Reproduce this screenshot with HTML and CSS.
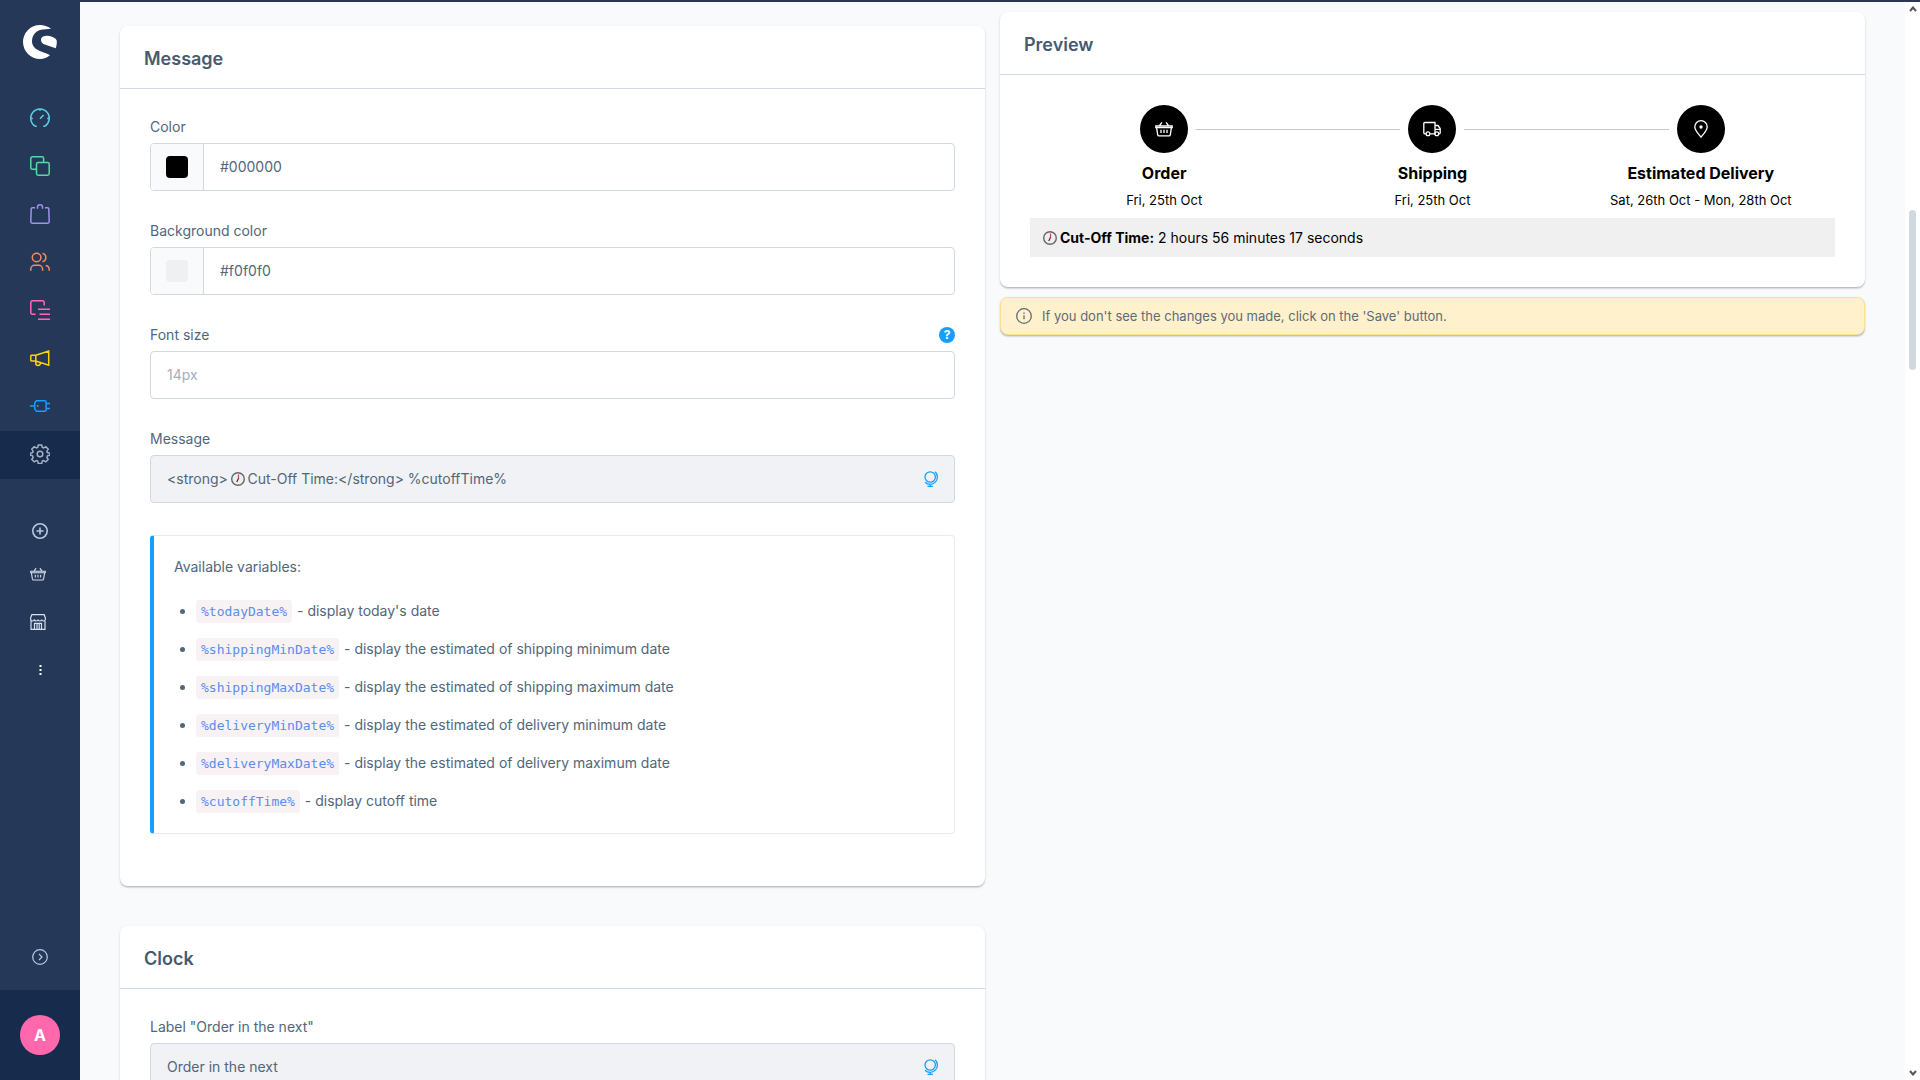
FILE: index.html
```html
<!DOCTYPE html>
<html lang="en">
<head>
<meta charset="utf-8">
<title>Message settings</title>
<link rel="stylesheet" href="styles.css">
</head>
<body>
<svg class="sprite" aria-hidden="true">
  <symbol id="globe" viewBox="0 0 16 16"><circle cx="6.200" cy="6" r="5.200"/><path d="M11.200.8A7.200 7.200 0 0 1 1 11.200M6.200 13.200v2M3.500 15.300h5.400"/></symbol>
  <symbol id="clock" viewBox="0 0 16 16"><circle cx="8" cy="8" r="6.300" fill="#eee" stroke="#666" stroke-width="1.400"/><path d="M8.500 3.500V8" stroke="#c2456f" stroke-width="1.200"/><path d="M8.500 7.500l-1.800 3.500" stroke="#333" stroke-width="1.200"/></symbol>
  <symbol id="basket" viewBox="0 0 18 16"><path d="M.8 5h16.4v1.6H.8zM1.6 6.6l1.1 7.2q.2 1 1.2 1h10.2q1 0 1.2-1l1.1-7.2M4.3 5l2.6-3.6M13.7 5l-2.6-3.6M6 8.8V12M9 8.8V12M12 8.8V12"/></symbol>
</svg>
<div class="app">
  <aside class="sidebar">
    <a href="#" class="logo" aria-label="Home"><svg viewBox="69 75 102 102"><path d="M153 86C143 79 131 75 120 75a51 51 0 0 0 0 102c12 0 22-4 30-11-8-6-20-9-32-14-14-6-22-15-22-28 0-22 16-36 41-36q10-1 16-2zM123 119c0-8 8-12 20-12 12 1 23 6 27 14 1 9 0 17-3 24-10-4-20-7-31-11-9-3-13-8-13-15z"/></svg></a>
    <nav class="nav" aria-label="Main">
      <a href="#" class="cyan" aria-label="Dashboard"><svg viewBox="0 0 20 20"><path d="M6.8 18.3H5.4a9.3 9.3 0 1 1 9.2 0h-1.4M10 .8v2M.8 10.6h2M17.2 10.6h2M10 10.8L13.6 7"/></svg></a>
      <a href="#" class="green" aria-label="Catalogues"><svg viewBox="0 0 20 20"><path d="M6.5 13.3H2.4A1.6 1.6 0 0 1 .8 11.700V2.400A1.600 1.600 0 0 1 2.400.8h9.600A1.600 1.600 0 0 1 13.600 2.400v4.100"/><rect x="6.500" y="6.500" width="12.700" height="12.700" rx="1.600"/></svg></a>
      <a href="#" class="violet" aria-label="Orders"><svg viewBox="0 0 20 20"><path d="M5 3.700H2.300Q1.200 3.700 1.200 4.800L.8 17.800q0 1.400 1.400 1.400h15.600q1.400 0 1.400-1.400L18.800 4.800q0-1.100-1.100-1.100H15M7.500 4.800V3q0-2.200 2.500-2.200T12.500 3v1.800"/></svg></a>
      <a href="#" class="orange" aria-label="Customers"><svg viewBox="0 0 20 20"><circle cx="6.600" cy="5.500" r="4.300"/><path d="M.8 18.700v-1.600a3.800 3.800 0 0 1 3.800-3.800h4.200a3.800 3.800 0 0 1 3.800 3.800v1.600M12.500 1.300a4.300 4.300 0 0 1 0 8.400M15.700 13.500q3.500.7 3.500 4v1.200"/></svg></a>
      <a href="#" class="pink" aria-label="Content"><svg viewBox="0 0 20 20"><path d="M5.500 14.200H2.300A1.500 1.500 0 0 1 .8 12.700V2.300A1.500 1.500 0 0 1 2.300.8h10.400a1.500 1.500 0 0 1 1.500 1.500v3.200M8 9.200h12M9.500 14.200H20M8 19.200h12"/></svg></a>
      <a href="#" class="yellow" aria-label="Marketing"><svg viewBox="0 0 20 20"><path d="M1.600 7.300h4.200L18.700 3v14.200L5.800 13H1.600q-.8 0-.8-.8V8q0-.7.8-.7zM5.800 7.300V13M5.800 13v2.200q0 2.200 2.200 2.200t2.300-2v-.8"/></svg></a>
      <a href="#" class="blue" aria-label="Extensions"><svg viewBox="0 0 20 20"><path d="M0 10h4.600M6.600 4.800h8q1.500 0 1.500 1.500v7.400q0 1.500-1.500 1.500h-8Q4.700 14.500 4.700 12V8q0-2.500 1.900-3.200zM16 7.500h4M16 12.500h4M7.700 9v2"/></svg></a>
      <a href="#" class="gray active" aria-label="Settings" aria-current="page"><svg viewBox="0 0 20 20"><circle cx="10" cy="10" r="2.800"/><path d="M8.300 1h3.400l.6 2.500 1.300.5 2.200-1.300 2.400 2.400-1.300 2.200.5 1.300 2.500.6v2l-2.500.6-.5 1.500 1.300 2.200-2.400 2.400-2.200-1.300-1.300.5-.6 2.500H8.300l-.6-2.500-1.300-.5-2.200 1.300-2.400-2.400 1.300-2.200-.5-1.500-2.200-.6v-2l2.200-.6.5-1.300-1.300-2.200 2.400-2.400L6.400 4l1.300-.5z"/></svg></a>
    </nav>
    <div class="quick">
      <button class="add" aria-label="Add sales channel"><svg viewBox="0 0 16 16"><circle cx="8" cy="8" r="7.200"/><path d="M8 4.500v7M4.500 8h7"/></svg></button>
      <a href="#" aria-label="Basket"><svg><use href="#basket"/></svg></a>
      <a href="#" aria-label="Storefront"><svg viewBox="0 0 16 16"><path d="M1 7v8.400h14V7M1.800.7h12.400L15.400 4v1.500q-.3 1.500-1.900 1.500T11.700 5.500Q11.400 7 9.800 7T8 5.500Q7.700 7 6.200 7T4.300 5.500Q4 7 2.500 7T.6 5.500V4zM4.500 15V9.300h7V15M7 9.500V15M9.200 9.500V15"/></svg></a>
      <button aria-label="More"><svg viewBox="0 0 16 16"><path class="dots" d="M7.500 3h2v2h-2zM7.500 7h2v2h-2zM7.500 11h2v2h-2z"/></svg></button>
    </div>
    <button class="expand" aria-label="Expand menu"><svg viewBox="0 0 16 16"><circle cx="8" cy="8" r="7.300"/><path d="M7 5l3 3-3 3"/></svg></button>
    <div class="user"><button class="avatar" aria-label="Account">A</button></div>
  </aside>

  <div class="view">
    <main class="content">
      <form class="column settings">
        <section class="card">
          <h2>Message</h2>
          <div class="body">
            <div class="field">
              <label for="color">Color</label>
              <div class="control">
                <span class="picker"><button type="button" class="swatch black" aria-label="Pick color"></button></span>
                <input id="color" type="text" value="#000000">
              </div>
            </div>
            <div class="field">
              <label for="bg">Background color</label>
              <div class="control">
                <span class="picker"><button type="button" class="swatch light" aria-label="Pick background color"></button></span>
                <input id="bg" type="text" value="#f0f0f0">
              </div>
            </div>
            <div class="field">
              <div class="label-row">
                <label for="size">Font size</label>
                <button type="button" class="help" aria-label="Help">?</button>
              </div>
              <div class="control"><input id="size" type="text" placeholder="14px"></div>
            </div>
            <div class="field">
              <label for="msg">Message</label>
              <div class="control inherited">
                <input id="msg" type="text" value="&lt;strong&gt;     Cut-Off Time:&lt;/strong&gt; %cutoffTime%">
                <svg class="clock inline-clock"><use href="#clock"/></svg>
                <svg class="globe"><use href="#globe"/></svg>
              </div>
            </div>
            <div class="variables">
              <p>Available variables:</p>
              <ul>
                <li><code>%todayDate%</code> - display today's date</li>
                <li><code>%shippingMinDate%</code> - display the estimated of shipping minimum date</li>
                <li><code>%shippingMaxDate%</code> - display the estimated of shipping maximum date</li>
                <li><code>%deliveryMinDate%</code> - display the estimated of delivery minimum date</li>
                <li><code>%deliveryMaxDate%</code> - display the estimated of delivery maximum date</li>
                <li><code>%cutoffTime%</code> - display cutoff time</li>
              </ul>
            </div>
          </div>
        </section>
        <section class="card">
          <h2>Clock</h2>
          <div class="body">
            <div class="field">
              <label for="next">Label "Order in the next"</label>
              <div class="control inherited">
                <input id="next" type="text" value="Order in the next">
                <svg class="globe"><use href="#globe"/></svg>
              </div>
            </div>
          </div>
        </section>
      </form>

      <div class="column preview">
        <section class="card">
          <h2>Preview</h2>
          <div class="body">
            <ol class="steps">
              <li>
                <span class="dot"><svg viewBox="0 0 18 16"><use href="#basket"/></svg></span>
                <strong>Order</strong><span>Fri, 25th Oct</span>
              </li>
              <li>
                <span class="dot"><svg viewBox="0 0 18 16"><path d="M3 12.800H1.800q-1 0-1-1V2.500q0-1 1-1H12v11.300H7.200M12 4.500h3l2.200 3v4.300q0 1-1 1H16M12 8.300h5"/><circle cx="5" cy="12.800" r="1.900"/><circle cx="13.800" cy="12.800" r="1.900"/></svg></span>
                <strong>Shipping</strong><span>Fri, 25th Oct</span>
              </li>
              <li>
                <span class="dot"><svg viewBox="0 0 18 18"><path d="M9 17.200C6 13.500 2.800 10 2.800 6.900a6.200 6.200 0 0 1 12.400 0C15.200 10 12 13.500 9 17.200z"/><circle cx="9" cy="7" r="1" fill="#fff"/></svg></span>
                <strong>Estimated Delivery</strong><span>Sat, 26th Oct - Mon, 28th Oct</span>
              </li>
            </ol>
            <div class="cutoff"><svg class="clock"><use href="#clock"/></svg><p><strong>Cut-Off Time:</strong> 2 hours 56 minutes 17 seconds</p></div>
          </div>
        </section>
        <div class="alert" role="status">
          <svg viewBox="0 0 16 16"><circle cx="8" cy="8" r="7.300"/><path d="M8 7.200v4M8 4.500v1.400"/></svg>
          <p>If you don't see the changes you made, click on the 'Save' button.</p>
        </div>
      </div>
    </main>
    <div class="scrollbar" aria-hidden="true">
      <svg viewBox="0 0 8 6"><path d="M1 5l3-3.500L7 5"/></svg>
      <div class="track"><div class="thumb"></div></div>
      <svg viewBox="0 0 8 6"><path d="M1 1l3 3.500L7 1"/></svg>
    </div>
  </div>
</div>
</body>
</html>
```
FILE: styles.css
```css
* { box-sizing: border-box; }
body, h2, p, ul, ol { margin: 0; padding: 0; }
body {
  font: 14px/16px Inter, "Liberation Sans", sans-serif;
  color: #52667a;
  background: #f9fafb;
}
button { border: 0; padding: 0; font: inherit; background: none; cursor: pointer; }
svg { display: block; flex: none; fill: none; stroke: currentColor; }
.sprite { position: absolute; width: 0; height: 0; }

.app { display: flex; height: 100vh; overflow: hidden; }

/* Sidebar */
.sidebar {
  display: flex;
  flex: none;
  flex-direction: column;
  width: 80px;
  color: #d8e0ec;
  background: #253858;
}
.logo { display: flex; justify-content: center; padding: 25px 0 36px; }
.logo svg { width: 34px; height: 34px; fill: #fff; stroke: none; }
.nav a, .quick > * { display: flex; align-items: center; justify-content: center; width: 100%; height: 48px; }
.nav a { padding-bottom: 2px; }
.nav svg { width: 20px; height: 20px; stroke-width: 1.5; }
.nav .active { background: #172b4d; }
.cyan { color: #5fcbe6; }
.green { color: #57d9a3; }
.violet { color: #a092f0; }
.orange { color: #f88962; }
.pink { color: #ff68b4; }
.yellow { color: #ffd500; }
.blue { color: #189eff; }
.gray { color: #a5b0c2; }
.quick { padding-top: 32px; }
.quick > * { color: inherit; }
.quick a { padding-right: 4px; }
.quick .add { height: 39px; color: #b9c8e0; }
.quick svg, .expand svg { width: 16px; height: 16px; stroke-width: 1.2; }
.quick .add svg { stroke-width: 1.6; }
.dots { fill: #fff; stroke: none; }
.expand { display: flex; justify-content: center; margin-top: auto; padding: 25px 0; color: #b9c8e0; }
.user { display: flex; justify-content: center; padding: 25px 0; background: #172b4d; }
.avatar { width: 40px; height: 40px; border-radius: 50%; color: #fff; font-size: 16px; font-weight: 700; background: #ff68ac; }

/* Page area */
.view { display: flex; flex: 1; min-width: 0; border-top: 2px solid #2b3750; }
.content {
  display: grid;
  flex: 1;
  grid-template-columns: 1fr 1fr;
  gap: 15px;
  min-width: 0;
  padding: 0 40px;
  overflow: hidden;
}
.column { display: flex; flex-direction: column; min-width: 0; }
.settings { gap: 40px; padding-top: 24px; }
.preview { gap: 10px; padding-top: 10px; }

.card {
  border-radius: 8px;
  background: #fff;
  box-shadow: 0 1px 1px rgba(0, 0, 0, .1), 0 2px 1px rgba(0, 0, 0, .08), 0 1px 3px rgba(0, 0, 0, .12);
}
.card h2 {
  padding: 21px 24px 17px;
  border-bottom: 1px solid #d1d9e0;
  color: #475a70;
  font-size: 18px;
  font-weight: 600;
  line-height: 24px;
}
.body { padding: 30px; }

/* Form fields */
.field { display: flex; flex-direction: column; gap: 8px; margin-bottom: 32px; }
.label-row { display: flex; align-items: center; justify-content: space-between; }
.help { width: 16px; height: 16px; border-radius: 50%; color: #fff; font-size: 12px; font-weight: 700; background: #189eff; }
.control {
  display: flex;
  align-items: center;
  position: relative;
  height: 48px;
  overflow: hidden;
  border: 1px solid #d1d9e0;
  border-radius: 4px;
  background: #fff;
}
.control input {
  flex: 1;
  min-width: 0;
  height: 100%;
  padding: 0 16px 2px;
  border: 0;
  color: inherit;
  font: inherit;
  background: none;
}
.control input::placeholder { color: #a3aebb; opacity: 1; }
.picker {
  display: flex;
  align-items: center;
  justify-content: center;
  width: 53px;
  height: 100%;
  border-right: 1px solid #d1d9e0;
  background: #f9fafb;
}
.swatch { width: 22px; height: 22px; border-radius: 4px; }
.black { background: #000; }
.light { background: #f0f0f0; }
.inherited { background: #f0f2f5; }
.globe { width: 16px; height: 16px; margin-right: 14px; color: #189eff; stroke-width: 1.3; }
.clock { width: 16px; height: 16px; }
.inline-clock { position: absolute; left: 79px; }

.variables {
  margin-bottom: 22px;
  padding: 23px 20px 13px;
  border: 1px solid #e9ecef;
  border-left: 4px solid #189eff;
  border-radius: 4px;
}
.variables ul { margin-top: 17px; padding-left: 22px; }
.variables li { line-height: 38px; }
.variables code {
  margin-right: 1px;
  padding: 4px 5px;
  border-radius: 3px;
  color: #5b8cf0;
  font: 13px "DejaVu Sans Mono", monospace;
  background: #f9f2f4;
}

/* Preview */
.steps { display: flex; list-style: none; color: #000; }
.steps li { display: flex; flex: 1; flex-direction: column; align-items: center; position: relative; font-size: 13px; }
.steps li:not(:last-child)::after {
  content: "";
  position: absolute;
  top: 24px;
  left: calc(50% + 32px);
  width: calc(100% - 64px);
  height: 1px;
  background: #c4c8cd;
}
.dot { display: flex; align-items: center; justify-content: center; width: 48px; height: 48px; border-radius: 50%; color: #fff; background: #000; }
.dot svg { width: 18px; height: 18px; stroke-width: 1.3; }
.steps strong { margin: 8px 0 7px; font-size: 16px; font-weight: 700; line-height: 24px; }
.steps li > span:last-child { margin-bottom: 10px; }
.cutoff { display: flex; align-items: center; gap: 2px; padding: 12px 12px 11px; color: #000; background: #f0f0f0; }
.alert {
  display: flex;
  align-items: center;
  gap: 10px;
  padding: 10px 15px;
  border: 1px solid #ffe08f;
  border-radius: 8px;
  color: #5f6b7a;
  font-size: 13px;
  background: #fff1cc;
  box-shadow: 0 1px 1px rgba(0, 0, 0, .1), 0 2px 1px rgba(0, 0, 0, .08), 0 1px 3px rgba(0, 0, 0, .12);
}
.alert svg { width: 16px; height: 16px; stroke-width: 1.3; }

/* Scrollbar */
.scrollbar { display: flex; flex: none; flex-direction: column; align-items: center; width: 15px; padding: 4px 0; color: #555; background: #fff; }
.scrollbar svg { width: 8px; height: 6px; stroke-width: 2; }
.track { flex: 1; width: 7px; padding-top: 198px; }
.thumb { height: 160px; border-radius: 4px; background: #d1d9e0; }
```
